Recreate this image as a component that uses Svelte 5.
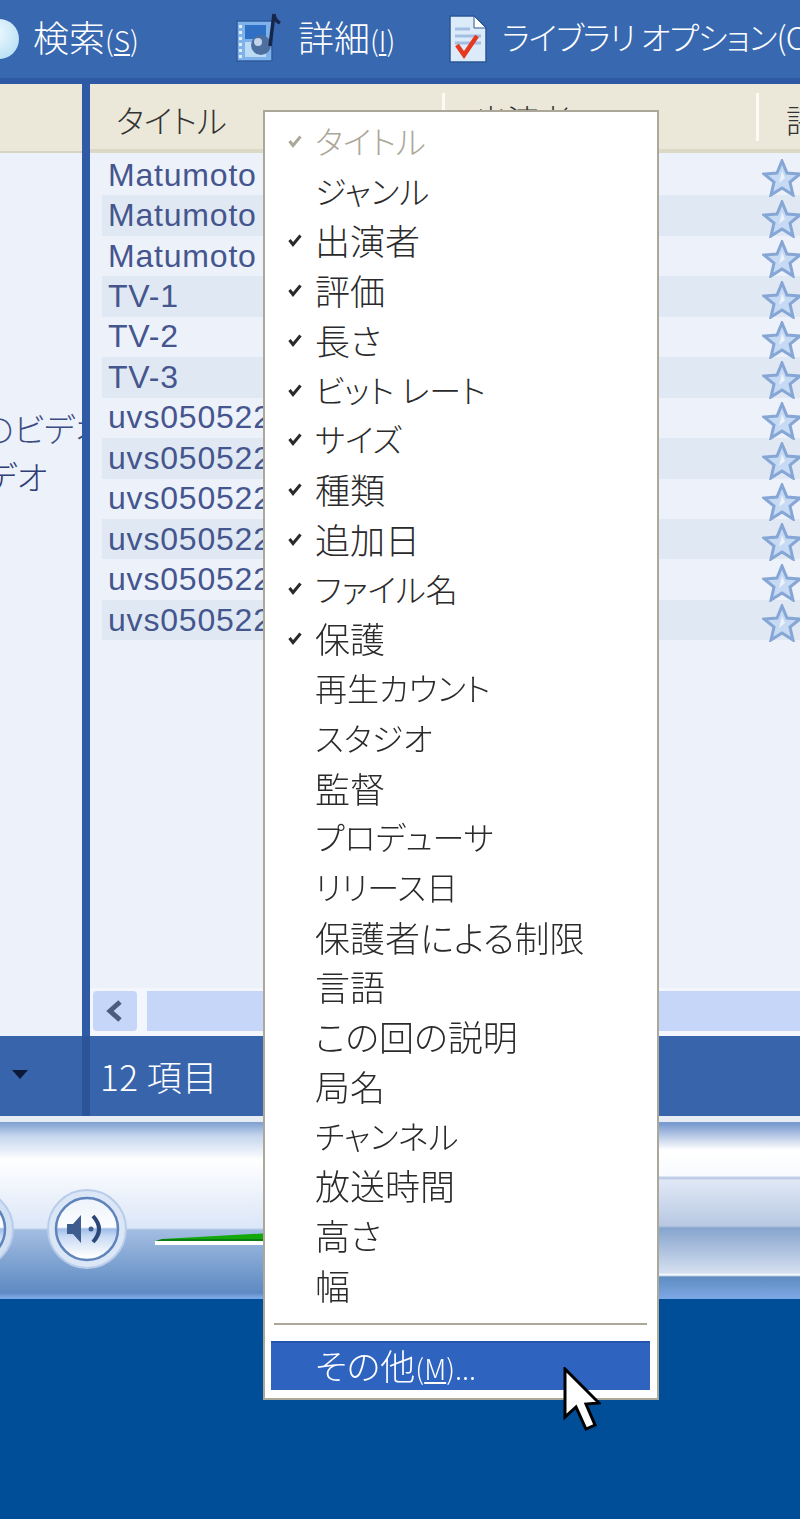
<script>
    // menu entries, checked ones get a tick. kana labels run narrower in the original font
    const columns = [
        { label: 'タイトル', on: true, disabled: true, kana: true },
        { label: 'ジャンル', kana: true },
        { label: '出演者', on: true },
        { label: '評価', on: true },
        { label: '長さ', on: true },
        { label: 'ビット レート', on: true, kana: true },
        { label: 'サイズ', on: true, kana: true },
        { label: '種類', on: true },
        { label: '追加日', on: true },
        { label: 'ファイル名', on: true, kana: true },
        { label: '保護', on: true },
        { label: '再生カウント' , kana: true },
        { label: 'スタジオ', kana: true },
        { label: '監督' },
        { label: 'プロデューサ', kana: true },
        { label: 'リリース日', kana: true },
        { label: '保護者による制限' },
        { label: '言語' },
        { label: 'この回の説明' },
        { label: '局名' },
        { label: 'チャンネル', kana: true },
        { label: '放送時間' },
        { label: '高さ' },
        { label: '幅' }
    ]

    const tracks = [
        'Matumoto', 'Matumoto', 'Matumoto', 'TV-1', 'TV-2', 'TV-3',
        'uvs050522', 'uvs050522', 'uvs050522', 'uvs050522', 'uvs050522', 'uvs050522'
    ]
</script>

<svg class="defs" width="0" height="0">
    <defs>
        <linearGradient id="knob" x1="0" y1="0" x2="0" y2="1">
            <stop offset="0" stop-color="#eef3fb"/>
            <stop offset="0.47" stop-color="#fbfdff"/>
            <stop offset="0.5" stop-color="#9fbde8"/>
            <stop offset="0.62" stop-color="#c8daf3"/>
            <stop offset="0.95" stop-color="#ffffff"/>
        </linearGradient>
    </defs>
</svg>

<div class="screen">
    <header class="toolbar">
        <span class="orb"></span>
        <span class="tool search">検索<small>(<u>S</u>)</small></span>
        <svg class="icon film" viewBox="0 0 46 50">
            <rect x="1" y="9" width="35" height="40" fill="#7fb2ea" stroke="#2f5b9e" stroke-width="1.5"/>
            <rect x="9" y="13" width="21" height="14" fill="#2f6fc4"/>
            <rect x="9" y="30" width="21" height="15" fill="#bcdcf6"/>
            <path d="M4.500 13 V46" stroke="#dcecfb" stroke-width="3" stroke-dasharray="3 3"/>
            <circle cx="25" cy="33" r="10" fill="#4d6f9f"/>
            <circle cx="22" cy="30" r="4" fill="#c3d4ea"/>
            <path d="M34 34 L38 2 Q38 8 44 11" fill="none" stroke="#16264a" stroke-width="3.500"/>
        </svg>
        <span class="tool detail">詳細<small>(<u>I</u>)</small></span>
        <svg class="icon doc" viewBox="0 0 40 50">
            <path d="M2 2 H26 L38 14 V48 H2 Z" fill="#dcebfa" stroke="#2b5596" stroke-width="1.500"/>
            <path d="M26 2 V14 H38 Z" fill="#fff" stroke="#2b5596" stroke-width="1"/>
            <path d="M7 15 H22 M7 22 H33 M7 29 H33" stroke="#a5bfe2" stroke-width="3"/>
            <path d="M9 31 L16 41 L29 22" fill="none" stroke="#e5391f" stroke-width="4.500"/>
        </svg>
        <span class="tool lib">ライブラリ オプション(O)</span>
    </header>

    <main class="body">
        <aside class="side">
            <div class="side-head"></div>
            <div class="side-list">
                <div class="side-line first">のビデオ</div>
                <div class="side-line second">デオ</div>
                <div class="side-line third">・</div>
            </div>
        </aside>
        <section class="content">
            <div class="heads">
                <span class="head title">タイトル</span>
                <span class="head cast">出演者</span>
                <span class="head rate">評価</span>
            </div>
            <div class="rows">
                {#each tracks as name, i}
                    <div class="row" class:alt={i % 2 === 1}>
                        <span class="name">{name}</span>
                        <svg class="star" viewBox="0 0 40 38">
                            <path d="M20 2 L25 14 L38 15 L28 23 L31 36 L20 29 L9 36 L12 23 L2 15 L15 14 Z" fill="#c6daf3" stroke="#86a6d6" stroke-width="3"/>
                            <path d="M20 12 L23 19 L17 24 Z" fill="#eaf2fb"/>
                        </svg>
                    </div>
                {/each}
            </div>
            <div class="scroll">
                <span class="arrow">
                    <svg viewBox="0 0 24 24" width="24" height="24"><path d="M17 3 L7 12 L17 21" fill="none" stroke="#4a5c80" stroke-width="5"/></svg>
                </span>
                <span class="thumb"></span>
            </div>
        </section>
    </main>

    <div class="status">
        <div class="status-left"><span class="caret"></span></div>
        <div class="status-right">12 項目</div>
    </div>

    <div class="player">
        <div class="controls">
            <svg class="knob partial" viewBox="0 0 84 84">
                <circle cx="42" cy="42" r="39" fill="#d2e0f4" stroke="#b9cdea" stroke-width="2"/>
                <circle cx="42" cy="42" r="31" fill="url(#knob)" stroke="#5f83bb" stroke-width="2.500"/>
            </svg>
            <svg class="knob volume" viewBox="0 0 84 84">
                <circle cx="42" cy="42" r="39" fill="#dbe6f6" stroke="#b9cdea" stroke-width="2"/>
                <circle cx="42" cy="42" r="31" fill="url(#knob)" stroke="#5f83bb" stroke-width="2.500"/>
                <path d="M22 37 H28 L36 28 V56 L28 47 H22 Z" fill="#3f5c8e"/>
                <path d="M48 29 Q60 42 48 55" fill="none" stroke="#2c4777" stroke-width="4"/>
                <circle cx="46" cy="42" r="2.500" fill="#3f5c8e"/>
            </svg>
            <svg class="slider" viewBox="0 0 300 24">
                <path d="M0 20 H300 V24 H0 Z" fill="#fff"/>
                <path d="M7 18 L300 2 V18 Z" fill="#12a80a"/>
                <path d="M7 18 H300 V20 H0 Z" fill="#0c7f12"/>
            </svg>
        </div>
        <div class="rest"></div>
    </div>

    <div class="desktop"></div>

    <div class="menu">
        {#each columns as c}
            <div class="item" class:disabled={c.disabled}>
                <span class="tick">
                    {#if c.on}
                        <svg viewBox="0 0 14 14" width="14" height="14"><path d="M1.500 7 L5 11.500 L12.500 2.500" fill="none" stroke="currentColor" stroke-width="3"/></svg>
                    {/if}
                </span>
                <span class:kana={c.kana}>{c.label}</span>
            </div>
        {/each}
        <div class="sep"></div>
        <div class="more">その他<small>(<u>M</u>)...</small></div>
    </div>

    <svg class="cursor" viewBox="0 0 38 66" width="38" height="66">
        <path d="M2 2 V50 L13 40 L23 62 L32 58 L23 37 L36 36 Z" fill="#fff" stroke="#000" stroke-width="3"/>
    </svg>
</div>

<style>
    :global(body) {
        margin: 0;
        background: #004e98;
    }

    .defs {
        position: absolute;
    }

    .screen {
        position: relative;
        width: 800px;
        height: 1519px;
        overflow: hidden;
        display: flex;
        flex-direction: column;
        font-family: "Noto Sans CJK JP", sans-serif;
        font-feature-settings: "palt";
        font-weight: 300;
        filter: blur(0.7px);
    }

    .toolbar {
        height: 78px;
        flex: none;
        box-sizing: content-box;
        background: #3868b0;
        border-bottom: 6px solid #2d5aa3;
        display: flex;
        align-items: center;
        color: #fff;
        font-size: 36px;
        white-space: nowrap;
        overflow: hidden;
    }

    .orb {
        flex: none;
        width: 40px;
        height: 40px;
        margin: 0 14px 0 -21px;
        border-radius: 50%;
        background: radial-gradient(circle at 40% 35%, #f2fbff, #a9d9f2);
    }

    .tool {
        flex: none;
        padding-bottom: 6px;
    }

    .tool small {
        font-size: 28px;
    }

    .search {
        width: 120px;
        margin-right: 83px;
    }

    .icon {
        flex: none;
        margin-bottom: 4px;
    }

    .film {
        width: 46px;
        height: 50px;
        margin-right: 16px;
    }

    .detail {
        width: 110px;
    }

    .doc {
        width: 40px;
        height: 50px;
        margin: 0 14px 0 40px;
    }

    .lib {
        font-size: 32px;
        letter-spacing: -1px;
    }

    .body {
        height: 952px;
        flex: none;
        display: flex;
        background: #ecf1fa;
    }

    .side {
        width: 82px;
        flex: none;
        overflow: hidden;
    }

    .side-head {
        height: 67px;
        background: #ebe8da;
        border-bottom: 2px solid #d8d4c2;
    }

    .side-list {
        color: #3c4d84;
        font-size: 33px;
        white-space: nowrap;
    }

    .side-line {
        line-height: 48px;
    }

    .first {
        margin: 251px 0 0 -18px;
    }

    .second {
        margin-left: -14px;
        color: #2e3d74;
    }

    .third {
        margin-left: -15px;
        line-height: 30px;
        color: #20305f;
    }

    .content {
        flex: 1;
        min-width: 0;
        display: flex;
        flex-direction: column;
        border-left: 8px solid #2f5aa5;
    }

    .heads {
        height: 65px;
        flex: none;
        background: #ebe8da;
        border-bottom: 4px solid #dcd8c6;
        display: flex;
        align-items: center;
        font-size: 32px;
        color: #333;
        white-space: nowrap;
        overflow: hidden;
    }

    .head {
        flex: none;
        height: 48px;
        line-height: 52px;
        box-sizing: border-box;
        border-right: 3px solid #fbfaf4;
    }

    .title {
        width: 355px;
        padding-left: 26px;
    }

    .cast {
        width: 314px;
        padding-left: 30px;
    }

    .rate {
        padding-left: 27px;
        border: 0;
    }

    .rows {
        flex: 1;
        padding-top: 2px;
    }

    .row {
        height: 40.45px;
        margin-left: 12px;
        display: flex;
        justify-content: space-between;
        align-items: center;
        font-family: "Liberation Sans", sans-serif;
        font-size: 32px;
        color: #45558d;
    }

    .row.alt {
        background: #e0e9f3;
    }

    .name {
        margin-left: 6px;
        letter-spacing: 0.8px;
    }

    .star {
        width: 40px;
        height: 38px;
        margin: 6px -2px 0 0;
        flex: none;
    }

    .scroll {
        height: 48px;
        flex: none;
        display: flex;
        align-items: center;
        gap: 10px;
        padding: 0 0 2px 3px;
        box-sizing: border-box;
        background: #f3f6fc;
    }

    .arrow {
        width: 44px;
        height: 40px;
        display: flex;
        align-items: center;
        justify-content: center;
        background: #c6d6f8;
        border-radius: 4px;
    }

    .thumb {
        flex: 1;
        height: 40px;
        background: #c6d6f8;
    }

    .status {
        height: 80px;
        flex: none;
        display: flex;
        background: #3864ac;
    }

    .status-left {
        width: 82px;
        flex: none;
        display: flex;
        align-items: center;
    }

    .caret {
        width: 0;
        height: 0;
        margin: 0 0 4px 12px;
        border: 8px solid transparent;
        border-top: 9px solid #0c1a3a;
        border-bottom: 0;
    }

    .status-right {
        flex: 1;
        border-left: 8px solid #2c5499;
        padding-left: 10px;
        color: #fff;
        font-size: 35px;
        letter-spacing: 0.5px;
        line-height: 80px;
    }

    .player {
        height: 183px;
        flex: none;
        box-sizing: border-box;
        border-top: 6px solid #e6ebf4;
        display: flex;
    }

    .controls {
        width: 460px;
        flex: none;
        display: flex;
        align-items: flex-start;
        padding-top: 65px;
        box-sizing: border-box;
        background: linear-gradient(#7e9fd0 0, #c5d6ee 14px, #fff 38px, #dbe6f7 106px, #a3bde2 108px, #5d8ac2 171px, #7ba6e4 175px);
    }

    .rest {
        flex: 1;
        background: linear-gradient(#7a9bd0 2px, #fff 28px, #f8fafe 54px, #c0cde6 55px, #c0cde6 57px, #e0e8f6 58px, #b8c8e2 104px, #86a4cd 106px, #d5e0f0 151px, #fff 153px, #5f8cc0 155px, #7ba6e4 175px);
    }

    .knob {
        flex: none;
        width: 84px;
        height: 84px;
    }

    .partial {
        margin-left: -68px;
    }

    .volume {
        margin-left: 29px;
    }

    .slider {
        flex: none;
        width: 300px;
        height: 24px;
        margin: 34px 0 0 26px;
    }

    .desktop {
        flex: 1;
        background: #004e98;
    }

    /* popup over the window */
    .menu {
        position: absolute;
        left: 263px;
        top: 110px;
        width: 396px;
        height: 1290px;
        box-sizing: border-box;
        padding: 4px 7px 0 6px;
        background: #fff;
        border: 2px solid #aca899;
        color: #2a2a2a;
        font-size: 35px;
        white-space: nowrap;
    }

    .item {
        height: 49.74px;
        line-height: 49.74px;
        display: flex;
        align-items: center;
    }

    .kana {
        font-size: 32px;
    }

    .tick {
        width: 44px;
        flex: none;
        display: flex;
        justify-content: flex-end;
        box-sizing: border-box;
        padding: 0 13px 0 12px;
    }

    .disabled {
        color: #aca899;
    }

    .sep {
        height: 2px;
        margin: 13px 3px 16px 3px;
        background: #aca899;
    }

    .more {
        height: 49px;
        line-height: 44px;
        padding-left: 44px;
        background: #2f63c0;
        border-top: 2px solid #2255b0;
        box-sizing: border-box;
        color: #fff;
    }

    .more small {
        font-size: 28px;
    }

    .cursor {
        position: absolute;
        left: 563px;
        top: 1367px;
    }
</style>
